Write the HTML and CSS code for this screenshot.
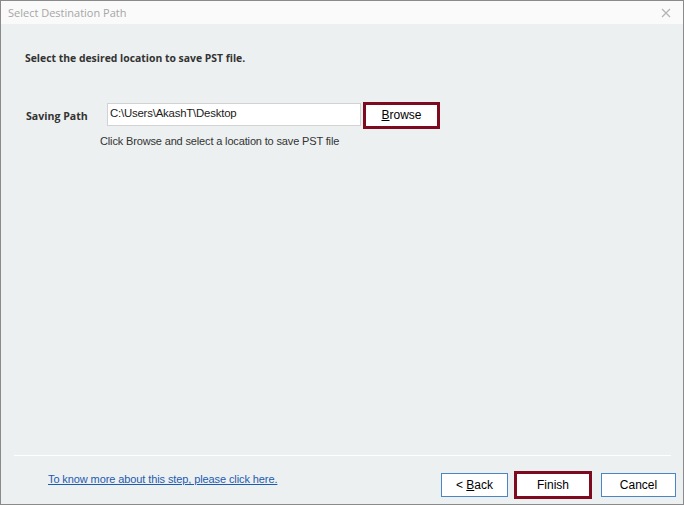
FILE: index.html
```html
<!DOCTYPE html>
<html lang="en">
	<head>
		<meta charset="UTF-8">
		<title>Select Destination Path</title>
		<link rel="stylesheet" href="styles.css">
	</head>
	<body>
		<div class="window">
			<div class="titlebar">
				<span class="title">Select Destination Path</span>
				<svg class="close" width="10" height="10" viewBox="0 0 10 10">
					<path d="M1 1 L9 9 M9 1 L1 9" stroke="#b4b4b4" stroke-width="1.2" fill="none"/>
				</svg>
			</div>
			<div class="content">
				<p class="heading">Select the desired location to save PST file.</p>
				<div class="path-row">
					<span class="label">Saving Path</span>
					<div class="path-box">C:\Users\AkashT\Desktop</div>
					<button class="btn btn-red btn-browse"><u>B</u>rowse</button>
				</div>
				<p class="hint">Click Browse and select a location to save PST file</p>
			</div>
			<div class="separator"></div>
			<div class="footer">
				<a class="help-link" href="#">To know more about this step, please click here.</a>
				<div class="buttons">
					<button class="btn btn-back">&lt; <u>B</u>ack</button>
					<button class="btn btn-red btn-finish">Finish</button>
					<button class="btn btn-cancel">Cancel</button>
				</div>
			</div>
		</div>
	</body>
</html>
```
FILE: styles.css
```css
* {
	box-sizing: border-box;
}
body {
	margin: 0;
	font-family: "Liberation Sans", Arial, sans-serif;
	font-size: 11px;
	color: #1a1a1a;
}
div.window {
	width: 684px;
	height: 505px;
	border: 1px solid #8a8a8a;
	background-color: #ecf0f0;
	display: flex;
	flex-direction: column;
}

div.titlebar {
	height: 23px;
	background-color: #fafafa;
	display: flex;
	align-items: center;
	justify-content: space-between;
	padding: 0 12px 0 7px;
}
span.title {
	font-family: "Open Sans", sans-serif;
	font-size: 11px;
	color: #a6a6a6;
}

div.content {
	flex: 1;
	padding-left: 24px;
}
p.heading {
	margin: 26px 0 0 0;
	line-height: 16px;
	font-family: "Open Sans", sans-serif;
	font-size: 10.4px;
	font-weight: bold;
	color: #333;
}
div.path-row {
	display: flex;
	align-items: center;
	margin-top: 35px;
	height: 28px;
}
span.label {
	width: 82px;
	margin-top: 2px;
	font-family: "Open Sans", sans-serif;
	font-size: 10.6px;
	font-weight: bold;
	color: #333;
	padding-left: 1px;
}
div.path-box {
	width: 254px;
	height: 23px;
	margin-top: -2px;
	background-color: #fff;
	border: 1px solid #d2d2d2;
	padding: 1px 0 0 2px;
	line-height: 16px;
	font-size: 11.4px;
	letter-spacing: -0.2px;
}
p.hint {
	margin: 4px 0 0 75px;
	line-height: 16px;
	color: #333;
	letter-spacing: -0.15px;
}

button.btn {
	font-family: "Liberation Sans", Arial, sans-serif;
	font-size: 12px;
	color: #000;
	background-color: #fff;
	padding: 0;
	cursor: pointer;
}
button.btn-red {
	border: 3px solid #7d0a1f;
}
button.btn-browse {
	width: 77px;
	height: 27px;
	margin-left: 2px;
}

div.separator {
	height: 1px;
	margin: 0 12px 0 13px;
	background-color: #fff;
}
div.footer {
	height: 48px;
	display: flex;
	justify-content: space-between;
	align-items: flex-start;
	padding: 15px 7px 0 47px;
}
a.help-link {
	line-height: 16px;
	color: #1c5bb0;
	text-decoration: underline;
	letter-spacing: -0.1px;
}
div.buttons {
	display: flex;
	align-items: flex-start;
}
button.btn-back,
button.btn-cancel {
	height: 24px;
	margin-top: 2px;
	border: 1px solid #4a86c6;
}
button.btn-back {
	width: 67px;
}
button.btn-finish {
	width: 78px;
	height: 28px;
	margin-left: 6px;
}
button.btn-cancel {
	width: 75px;
	margin-left: 9px;
}
```
